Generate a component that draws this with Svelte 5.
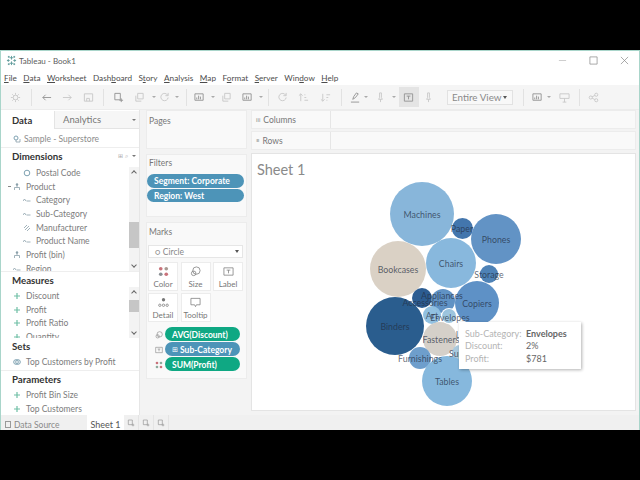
<script>
  const menu = [['F','ile'],['D','ata'],['W','orksheet'],['Dash','board','b'],['S','tory','t'],['A','nalysis'],['M','ap'],['F','ormat','o'],['S','erver'],['Win','dow','d'],['H','elp']];
  const tools = [
    ['gear',20],['sep',12],['back',18],['fwd',24],['save',18],['sep',12],['new',18],['dup',24],['dd',6],['redo',14],['dd',12],['sep',6],
    ['chart',20],['dd',8],['dup',18],['chart',24],['dd',4],['sep',10],['redo',18],['sortu',24],['sortd',20],['sep',12],
    ['pen',16],['dd',6],['pin',22],['dd',6],['text',22],['pin',18],['gap',10],['view',66],['sep',20],['chart',8],['dd',16],['board',14],['sep',16],['share',12]
  ];
  const dims = [
    ['globe','Postal Code',1],['tree','Product',0,1],['abc','Category',1],['abc','Sub-Category',1],['clip','Manufacturer',1],['abc','Product Name',1],['tree','Profit (bin)',0],['abc','Region',0]
  ];
  const measures = ['Discount','Profit','Profit Ratio','Quantity'];
  const circles = [
    ['Machines',422,214,32,'#86b5d9'],['Paper',462,228,10.5,'#3f73ab'],['Phones',496,239,25,'#5f91c4'],['Chairs',451,263,25,'#86b7dc'],
    ['Bookcases',398,269,28,'#d9d0c4'],['Storage',489,274,9,'#4a7fb5'],['Binders',395,326,29,'#265a8c'],['Copiers',477,303,22,'#5b8fc5'],
    ['Accessories',422,298,10,'#28598f',425,302],['Appliances',443,301,12,'#5d90c3',442,295],['Art',432,315,9,'#90c0e0'],['Envelopes',449,316,7,'#9cc4de',450,317],
    ['Fasteners',440,339,17,'#d4cfc8',441,339],['Labels',468,334,7,'#b9cfdf'],['Furnishings',420,358,11,'#6b9ccb'],['Supplies',460,353,8,'#a8c8dc',465,353],['Tables',447,381,25,'#84b7dc']
  ];
</script>

{#snippet icon(n)}
  <svg class="ic" viewBox="0 0 12 12" aria-hidden="true">
    {#if n==='gear'}<circle cx="6" cy="6" r="2.5"/><path d="M6 1v2M6 9v2M1 6h2M9 6h2M2.5 2.5l1.500 1.500M8 8l1.500 1.500M9.500 2.500L8 4M4 8l-1.500 1.500"/>
    {:else if n==='back'}<path class="d" d="M11 6H2M5 3L2 6l3 3"/>
    {:else if n==='fwd'}<path d="M1 6h9M7 3l3 3-3 3"/>
    {:else if n==='save'}<path d="M1.500 2h9v8h-9zM4 10V7h3v3"/>
    {:else if n==='new'}<path class="d" d="M2 1.500h6v7H2zM9 7v4M7 9h4"/>
    {:else if n==='dup'}<path d="M4 1.500h6v6H4zM2 4v6h6"/>
    {:else if n==='redo'}<path d="M9.500 3.500A4 4 0 1 0 10 6M10 1v3H7"/>
    {:else if n==='chart'}<path class="d" d="M1 2h9v7H1zM3 8V6M5 8V4M7 8V5"/>
    {:else if n==='sortu'}<path d="M3 10V2M1 4l2-2 2 2M7 3h1M7 6h2M7 9h4"/>
    {:else if n==='sortd'}<path d="M3 2v8M1 8l2 2 2-2M7 3h4M7 6h2M7 9h1"/>
    {:else if n==='pen'}<path class="d" d="M3 8l1-3 3-4 2 1-3 4zM1 11h9"/>
    {:else if n==='pin'}<path d="M5 1h2v5l1 2H4l1-2zM6 8v3"/>
    {:else if n==='text'}<path class="d" d="M1.500 2h9v8h-9zM4 4.500h4M6 4.500V8"/>
    {:else if n==='board'}<path d="M1 2h10v5H1zM6 7v4M4 11h4"/>
    {:else if n==='share'}<circle cx="3" cy="6" r="1.700"/><circle cx="9" cy="3" r="1.700"/><circle cx="9" cy="9" r="1.700"/><path d="M4.500 5.200L7.500 3.800M4.500 6.800l3 1.400"/>
    {/if}
  </svg>
{/snippet}

{#snippet field(t)}
  <svg class="fi" viewBox="0 0 8 8" aria-hidden="true">
    {#if t==='abc'}<path class="fline" d="M0 5l1.500-2L3 5M3.500 5h4"/>
    {:else if t==='globe'}<circle cx="4" cy="4" r="2.800" class="fring"/>
    {:else if t==='tree'}<path class="fline" d="M4 1v3M1.500 7V4.500h5V7"/><circle cx="4" cy="1.500" r="1.200" class="fdot"/>
    {:else if t==='clip'}<path class="fline" d="M2 6l4-4M1 4l3-3M4 7l3-3"/>
    {:else if t==='hash'}<path class="ggrn" d="M4 1v6M1 4h6"/>
    {:else if t==='set'}<circle cx="3" cy="4" r="2.300" class="fring"/><circle cx="5" cy="4" r="2.300" class="fring"/>
    {/if}
  </svg>
{/snippet}

<div class="screen">
  <div class="win">
    <header class="title">
      <svg class="logo" viewBox="0 0 12 12" aria-hidden="true"><path d="M6 1v4M4 3h4M6 7v4M4 9h4M2.500 4.500v3M1 6h3M9.500 4.500v3M8 6h3M3 1v2M2 2h2M9 1v2M8 2h2M3 9v2M2 10h2M9 9v2M8 10h2"/></svg>
      <span>Tableau - Book1</span>
      <div class="winbtns">
        <svg viewBox="0 0 10 10" aria-hidden="true"><path d="M1 5h8"/></svg>
        <svg viewBox="0 0 10 10" aria-hidden="true"><path d="M1 1h8v8H1z"/></svg>
        <svg viewBox="0 0 10 10" aria-hidden="true"><path d="M1 1l8 8M9 1l-8 8"/></svg>
      </div>
    </header>
    <nav class="menu">
      {#each menu as m}
        <span>{#if m[2]}{m[0]}<u>{m[2]}</u>{m[1].slice(1)}{:else}<u>{m[0]}</u>{m[1]}{/if}</span>
      {/each}
    </nav>
    <div class="toolbar">
      {#each tools as [n,w]}
        <div class="tool" class:on={n==='text'} style="width:{w}px">
          {#if n==='sep'}<i class="sep"></i>
          {:else if n==='dd'}<i class="dd"></i>
          {:else if n==='view'}<div class="viewsel"><span>Entire View</span><i class="caret"></i></div>
          {:else if n!=='gap'}{@render icon(n)}{/if}
        </div>
      {/each}
    </div>

    <div class="main">
      <aside class="data">
        <div class="tabs2"><div class="t active">Data</div><div class="t other">Analytics<i class="caret small"></i></div></div>
        <div class="source">
          <svg class="fi" viewBox="0 0 8 8" aria-hidden="true"><circle cx="3" cy="3" r="2" class="fring"/><path class="fline" d="M3 5v2h4V4"/></svg>
          Sample - Superstore
        </div>
        <div class="hd dimhd"><b>Dimensions</b><span class="mini">⊞ ⌕</span><i class="caret small"></i></div>
        <div class="list dims">
          {#each dims as [t,label,sub,open]}
            <div class="row" class:sub={sub}>
              {#if open}<i class="minus"></i>{/if}{@render field(t)}<span>{label}</span>
            </div>
          {/each}
          <div class="sb dsb"><span class="up"></span><span class="thumb thumb1"></span><span class="down"></span></div>
        </div>
        <div class="hd mhd"><b>Measures</b></div>
        <div class="list meas">
          {#each measures as m}<div class="row">{@render field('hash')}<span>{m}</span></div>{/each}
          <div class="sb"><span class="up"></span><span class="thumb thumb2"></span><span class="down"></span></div>
        </div>
        <div class="hd shd"><b>Sets</b></div>
        <div class="row setrow">{@render field('set')}<span>Top Customers by Profit</span></div>
        <div class="hd phd"><b>Parameters</b></div>
        <div class="row">{@render field('hash')}<span>Profit Bin Size</span></div>
        <div class="row">{@render field('hash')}<span>Top Customers</span></div>
      </aside>

      <section class="cards">
        <div class="card pages"><h4>Pages</h4></div>
        <div class="card filters">
          <h4>Filters</h4>
          <div class="pill blue wide">Segment: Corporate</div>
          <div class="pill blue wide">Region: West</div>
        </div>
        <div class="card marks">
          <h4>Marks</h4>
          <div class="select"><span>○ Circle</span><i class="caret"></i></div>
          <div class="mbtns">
            <div class="mb"><svg viewBox="0 0 12 12" aria-hidden="true"><circle cx="3" cy="3" r="2" fill="#c9727a"/><circle cx="9" cy="3" r="2" fill="#a79a92"/><circle cx="3" cy="9" r="2" fill="#8a8f94"/><circle cx="9" cy="9" r="2" fill="#c9727a"/></svg>Color</div>
            <div class="mb"><svg viewBox="0 0 12 12" aria-hidden="true"><circle class="o" cx="7" cy="5" r="4"/><circle class="o" cx="4" cy="8" r="2.500"/></svg>Size</div>
            <div class="mb"><svg viewBox="0 0 12 12" aria-hidden="true"><path class="o" d="M1 2h10v8H1zM4 4.500h4M6 4.500V8"/></svg>Label</div>
            <div class="mb"><svg viewBox="0 0 12 12" aria-hidden="true"><circle cx="6" cy="3" r="1.800" fill="#777"/><circle class="o" cx="2" cy="9" r="1.300"/><circle class="o" cx="6" cy="9" r="1.300"/><circle class="o" cx="10" cy="9" r="1.300"/></svg>Detail</div>
            <div class="mb"><svg viewBox="0 0 12 12" aria-hidden="true"><path class="o" d="M1 1.500h10v7H7l-1 2-1-2H1z"/></svg>Tooltip</div>
          </div>
          <div class="enc">
            <svg viewBox="0 0 12 12" aria-hidden="true"><circle class="o" cx="7" cy="5" r="4"/><circle class="o" cx="4" cy="8" r="2.500"/></svg>
            <div class="pill green">AVG(Discount)</div>
          </div>
          <div class="enc">
            <svg viewBox="0 0 12 12" aria-hidden="true"><path class="o" d="M1 2h10v8H1zM4 4.500h4M6 4.500V8"/></svg>
            <div class="pill blue"><small>⊞</small> Sub-Category</div>
          </div>
          <div class="enc">
            <svg viewBox="0 0 12 12" aria-hidden="true"><circle cx="3" cy="3" r="2" fill="#c9727a"/><circle cx="9" cy="3" r="2" fill="#8cab9d"/><circle cx="3" cy="9" r="2" fill="#8cab9d"/><circle cx="9" cy="9" r="2" fill="#c9727a"/></svg>
            <div class="pill green">SUM(Profit)</div>
          </div>
        </div>
      </section>

      <section class="work">
        <div class="shelf"><div class="sl"><em>iii</em>Columns</div></div>
        <div class="shelf"><div class="sl"><em>≡</em>Rows</div></div>
        <div class="canvas">
          <div class="sheet">Sheet 1</div>
          {#each circles as c}
            <div class="bub" class:hover={c[0]==='Envelopes'} style="left:{c[1]-c[3]-252}px;top:{c[2]-c[3]-154}px;width:{c[3]*2}px;height:{c[3]*2}px;background:{c[4]}"></div>
          {/each}
          {#each circles as c}
            <div class="lab" style="left:{(c[5]??c[1])-252}px;top:{(c[6]??c[2])-154}px">{c[0]}</div>
          {/each}
          <div class="tip">
            <div class="k">Sub-Category:</div><div class="v"><b>Envelopes</b></div>
            <div class="k">Discount:</div><div class="v">2%</div>
            <div class="k">Profit:</div><div class="v">$781</div>
          </div>
        </div>
      </section>
    </div>

    <footer class="tabbar">
      <div class="ds"><i class="dbi"></i>Data Source</div>
      <div class="sheettab">Sheet 1</div>
      <div class="newtab">{@render icon('new')}</div>
      <div class="newtab">{@render icon('new')}</div>
      <div class="newtab">{@render icon('new')}</div>
    </footer>
  </div>
</div>

<style>
  :global(body){margin:0;background:#000}
  .screen{width:640px;height:480px;background:#000;padding:50px 0;box-sizing:border-box;font-family:Lato,"Open Sans",sans-serif;font-size:9px;color:#666}
  .win{height:380px;box-sizing:border-box;border:1px solid #a9d5ca;border-bottom:0;background:#f3f3f3;display:flex;flex-direction:column;overflow:hidden}

  .title{height:18px;background:#fff;display:flex;align-items:center;padding:1px 0 0 5px;box-sizing:border-box;color:#5b5b5b;font-size:8px;flex:none}
  .logo{width:11px;height:11px;margin-right:2px;fill:none;stroke:#5e9a9a;stroke-width:1}
  .winbtns{margin-left:auto;display:flex;gap:22px;padding-right:10px}
  .winbtns svg{width:9px;height:9px;fill:none;stroke:#8a8a8a;stroke-width:.8}
  .winbtns svg:first-child{stroke:#bbb}

  .menu{height:16px;background:#fff;display:flex;gap:6.500px;align-items:center;padding:1px 0 0 3px;box-sizing:border-box;color:#4c4c4c;font-size:8.200px;flex:none}

  .toolbar{height:25px;background:#f5f5f5;display:flex;align-items:center;padding-left:4px;flex:none;box-sizing:border-box;border-bottom:1px solid #ececec}
  .tool{height:20px;display:flex;align-items:center;justify-content:center;flex:none;position:relative}
  .tool.on::before{content:"";position:absolute;left:2px;right:0;top:0;bottom:0;background:#e4e4e4}
  .ic{width:11px;height:11px;fill:none;stroke:#c8c8c8;stroke-width:1;flex:none;position:relative;overflow:visible}
  .ic .d{stroke:#949494}
  .sep{width:1px;height:17px;background:#e2e2e2;display:block}
  .dd{width:0;height:0;border:2px solid transparent;border-top:2.500px solid #aaa;border-bottom:0;display:block}
  .viewsel{width:66px;height:15px;box-sizing:border-box;border:1px solid #e2e2e2;background:#f8f8f8;display:flex;align-items:center;justify-content:space-between;padding:0 5px 0 4px;font-size:9.800px;color:#8a8a8a;white-space:nowrap}
  .caret{width:0;height:0;border:2.500px solid transparent;border-top:3px solid #555;border-bottom:0;display:block;flex:none}
  .caret.small{border-width:2px;border-top-width:2px;border-top-color:#777}

  .main{flex:1;display:flex;min-height:0}
  .data{width:139px;background:#fff;flex:none;display:flex;flex-direction:column;overflow:hidden;border-right:1px solid #e6e6e6;box-sizing:border-box;padding-top:1px}
  .tabs2{height:18px;display:flex;flex:none}
  .t{display:flex;align-items:center}
  .t.active{width:53px;padding-left:11px;box-sizing:border-box;color:#333;font-weight:700;font-size:9.500px}
  .t.other{flex:1;background:#f6f6f6;border-left:1px solid #e4e4e4;border-bottom:1px solid #e4e4e4;padding-left:8px;color:#777;justify-content:space-between;padding-right:3px;font-size:9.500px}
  .source{height:19px;display:flex;align-items:center;gap:3px;padding:1px 0 0 12px;color:#8c8c8c;font-size:8.500px;border-bottom:1px solid #eee;flex:none;box-sizing:border-box}
  .hd{display:flex;align-items:center;padding-left:11px;color:#333;flex:none;font-size:9.700px}
  .hd b{font-weight:700}
  .dimhd{height:16px;padding-right:3px}
  .mini{margin-left:auto;margin-right:4px;font-size:6px;color:#aaa}
  .list{position:relative;overflow:hidden;flex:none}
  .dims{height:108px;border-bottom:1px solid #eee;padding-top:2px;box-sizing:border-box}
  .row{height:13.700px;display:flex;align-items:center;gap:5px;padding-left:12px;color:#7c7c7c;font-size:8.500px;flex:none;position:relative;white-space:nowrap}
  .row.sub{padding-left:22px}
  .fi{width:8px;height:8px;flex:none}
  .fline{fill:none;stroke:#8aa0aa;stroke-width:.8}
  .fring{fill:none;stroke:#7fa2b2;stroke-width:1}
  .fdot{fill:#8aa0aa}
  .ggrn{fill:none;stroke:#6fbfa5;stroke-width:1.200}
  .minus{position:absolute;left:7px;top:6px;width:3px;height:1px;background:#888}
  .sb{position:absolute;right:0;top:0;bottom:0;width:10px;background:#f3f3f3}
  .dsb{top:3px}
  .thumb{position:absolute;left:0;right:0;background:#c6c6c6}
  .thumb1{top:55px;height:26px}
  .thumb2{top:13px;height:12px}
  .up,.down{position:absolute;left:2.500px;width:3px;height:3px;border-left:1px solid #666;border-top:1px solid #666;transform:rotate(45deg);top:4px}
  .down{transform:rotate(225deg);top:auto;bottom:4px}
  .mhd{height:15px}
  .meas{height:51px;padding-top:2px;box-sizing:border-box}
  .shd{height:15px}
  .setrow{height:18px;padding-top:1px;border-bottom:1px solid #eee;box-sizing:border-box}
  .phd{height:15px;margin-bottom:2px}

  .cards{width:101px;margin:0 4px 0 6px;flex:none;display:flex;flex-direction:column;gap:5px}
  .card{background:#f9f9f9;border:1px solid #ececec;box-sizing:border-box;padding:0 2px}
  h4{margin:0;font-weight:400;font-size:8.500px;color:#777;padding:5px 0 0;height:13px;line-height:11px}
  .pages{height:39px}
  .filters{height:63px;padding:0 2px 0 0}
  .filters h4{padding:3px 0 0 2px;height:16px}
  .marks{height:157px;padding:0 3px 0 1px}
  .marks h4{padding:4px 0 0 1px;height:18px}
  .pill{height:13.500px;border-radius:7px;color:#fff;display:flex;align-items:center;padding:1px 0 0 7px;font-size:8.500px;font-weight:700;white-space:nowrap;box-sizing:border-box;margin-bottom:1px}
  .pill small{font-size:7px;font-weight:400;margin-right:2px}
  .blue{background:#4d94b8}
  .green{background:#0fa883}
  .select{height:13px;margin:0 0 4px;background:#fff;border:1px solid #e6e6e6;display:flex;justify-content:space-between;align-items:center;padding:0 3px 0 6px;color:#888;font-size:8.500px;box-sizing:border-box}
  .mbtns{display:grid;grid-template-columns:repeat(3,30px);gap:2px 2.500px;margin:0 0 5px}
  .mb{height:29px;background:#fff;border:1px solid #ececec;box-sizing:border-box;display:flex;flex-direction:column;align-items:center;justify-content:space-between;padding:3px 0 1px;font-size:8px;color:#777}
  .mb svg{width:11px;height:11px}
  .o{fill:none;stroke:#777;stroke-width:.8}
  .enc{display:flex;align-items:center;gap:2px;padding-left:7px;height:15px}
  .enc svg{width:8px;height:8px;flex:none}
  .enc .pill{width:75px;flex:none}

  .work{flex:1;display:flex;flex-direction:column;gap:2px;margin-right:3px;min-width:0}
  .shelf{height:19px;background:#f9f9f9;border:1px solid #ececec;box-sizing:border-box;flex:none;display:flex}
  .sl{width:79px;box-sizing:border-box;border-right:1px solid #e6e6e6;display:flex;align-items:center;gap:3px;padding-left:4px;font-size:8.500px;color:#777}
  .sl em{font-style:normal;font-size:6px;color:#888}
  .canvas{height:258px;background:#fff;border:1px solid #e4e4e4;box-sizing:border-box;position:relative;margin-top:1px;overflow:hidden;flex:none}
  .sheet{font-size:14.500px;color:#8a8a8a;padding:7px 0 0 5px}
  .bub{position:absolute;border-radius:50%;opacity:.98}
  .bub.hover{box-shadow:0 0 0 1px #fff;z-index:1}
  .lab{position:absolute;transform:translate(-50%,-50%);font-size:8.800px;color:rgba(35,45,65,.72);white-space:nowrap;z-index:2}
  .tip{position:absolute;left:207px;top:168px;width:122px;height:47px;box-sizing:border-box;background:#fff;box-shadow:1px 1px 3px rgba(0,0,0,.3);padding:5px 0 0 6px;display:grid;grid-template-columns:61px 1fr;grid-auto-rows:12.500px;align-items:center;font-size:9px;z-index:3}
  .k{color:#b4b4b4}
  .v{color:#666}
  .v b{font-weight:700}

  .tabbar{height:15px;background:#f0f0f0;display:flex;align-items:stretch;flex:none;font-size:8.500px;color:#8a8a8a}
  .ds{width:86px;padding:4px 0 0 4px;display:flex;align-items:center;gap:3px;box-sizing:border-box}
  .dbi{width:4px;height:5px;border:1px solid #999;display:block}
  .sheettab{width:37px;background:#fff;color:#555;display:flex;align-items:center;justify-content:center;padding-top:3px;box-sizing:border-box;font-size:9px}
  .newtab{width:14px;display:flex;align-items:center;justify-content:center;border-right:1px solid #e4e4e4}
  .newtab .ic{width:8px;height:8px}
</style>
